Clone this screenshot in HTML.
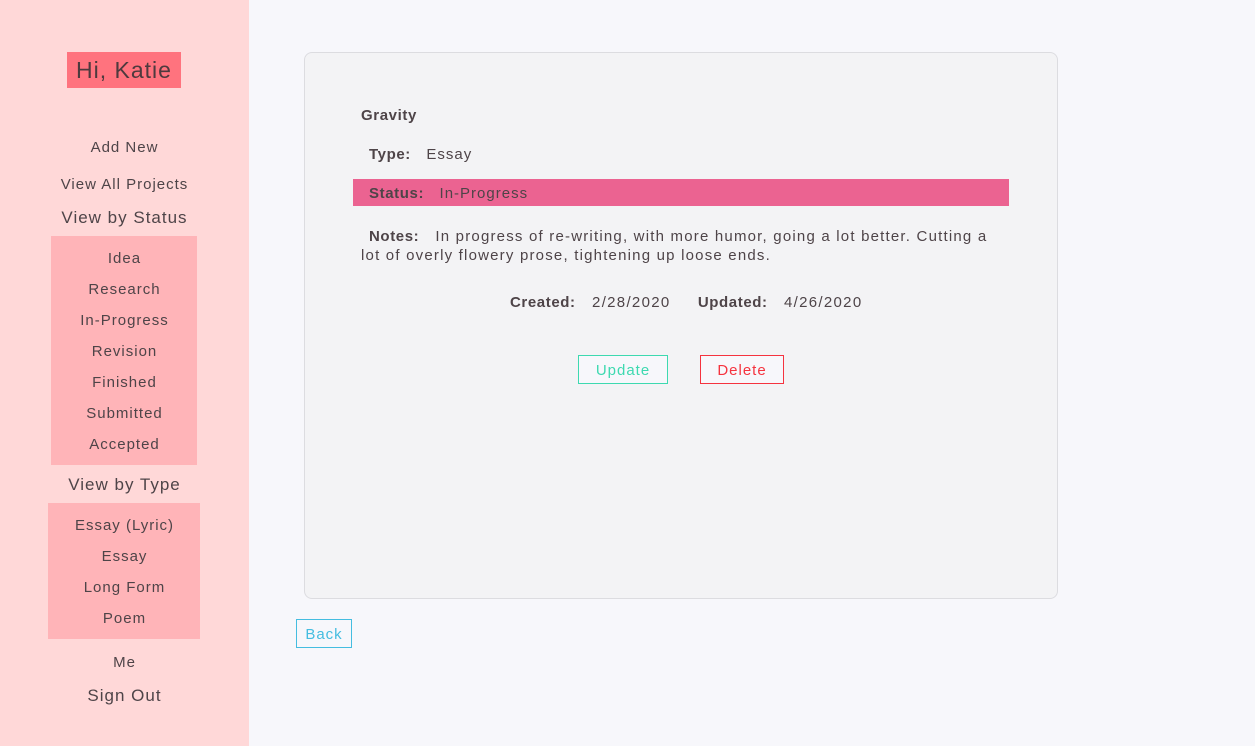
<!DOCTYPE html>
<html><head><style>
*{margin:0;padding:0;box-sizing:border-box}
body{width:1255px;height:746px;background:#f7f7fb;font-family:"Liberation Sans",sans-serif;color:#4e4448;position:relative;overflow:hidden;letter-spacing:1px}
.side{position:absolute;left:0;top:0;width:249px;height:746px;background:#ffd8d8}
.t{position:absolute;white-space:nowrap}
.c{left:0;width:249px;text-align:center}
.blk{position:absolute;background:#ffb4b8}
b{font-weight:bold;letter-spacing:0.6px}
</style></head><body>
<div class="side">
<div class="t" style="left:67px;top:52px;width:114px;height:36px;background:#ff737e;font-size:23px;line-height:36px;text-align:center;color:#4e3a3e">Hi, Katie</div>
<div class="t c" style="top:139px;font-size:15px">Add New</div>
<div class="t c" style="top:176px;font-size:15px">View All Projects</div>
<div class="t c" style="top:208px;font-size:17px">View by Status</div>
<div class="blk" style="left:51px;top:236px;width:146px;height:229px"></div>
<div class="t c" style="top:250px;font-size:15px">Idea</div>
<div class="t c" style="top:281px;font-size:15px">Research</div>
<div class="t c" style="top:312px;font-size:15px">In-Progress</div>
<div class="t c" style="top:343px;font-size:15px">Revision</div>
<div class="t c" style="top:374px;font-size:15px">Finished</div>
<div class="t c" style="top:405px;font-size:15px">Submitted</div>
<div class="t c" style="top:436px;font-size:15px">Accepted</div>
<div class="t c" style="top:475px;font-size:17px">View by Type</div>
<div class="blk" style="left:48px;top:503px;width:152px;height:136px"></div>
<div class="t c" style="top:517px;font-size:15px">Essay (Lyric)</div>
<div class="t c" style="top:548px;font-size:15px">Essay</div>
<div class="t c" style="top:579px;font-size:15px">Long Form</div>
<div class="t c" style="top:610px;font-size:15px">Poem</div>
<div class="t c" style="top:654px;font-size:15px">Me</div>
<div class="t c" style="top:686px;font-size:17px">Sign Out</div>
</div>
<div style="position:absolute;left:304px;top:52px;width:754px;height:547px;background:#f3f3f5;border:1px solid #dcdce0;border-radius:8px"></div>
<div class="t" style="left:361px;top:107px;font-size:15px"><b>Gravity</b></div>
<div class="t" style="left:369px;top:146px;font-size:15px"><b>Type:</b>&nbsp;&nbsp; Essay</div>
<div style="position:absolute;left:353px;top:179px;width:656px;height:27px;background:#eb6391"></div>
<div class="t" style="left:369px;top:185px;font-size:15px"><b>Status:</b>&nbsp;&nbsp; In-Progress</div>
<div class="t" style="left:369px;top:228px;font-size:15px;letter-spacing:1.2px"><b>Notes:</b>&nbsp;&nbsp; In progress of re-writing, with more humor, going a lot better. Cutting a</div>
<div class="t" style="left:361px;top:247px;font-size:15px;letter-spacing:1.2px">lot of overly flowery prose, tightening up loose ends.</div>
<div class="t" style="left:510px;top:294px;font-size:15px;letter-spacing:1.3px"><b>Created:</b>&nbsp;&nbsp; 2/28/2020 &nbsp;&nbsp;&nbsp;&nbsp;<b>Updated:</b>&nbsp;&nbsp; 4/26/2020</div>
<div class="t" style="left:578px;top:355px;width:90px;height:29px;border:1px solid #3dd9b0;color:#3dd9b0;font-size:15px;line-height:29px;text-align:center;background:#f7f7fb">Update</div>
<div class="t" style="left:700px;top:355px;width:84px;height:29px;border:1px solid #f5333f;color:#f5333f;font-size:15px;line-height:29px;text-align:center;background:#f7f7fb">Delete</div>
<div class="t" style="left:296px;top:619px;width:56px;height:29px;border:1px solid #45bde0;color:#45bde0;font-size:15px;line-height:29px;text-align:center">Back</div>
</body></html>
